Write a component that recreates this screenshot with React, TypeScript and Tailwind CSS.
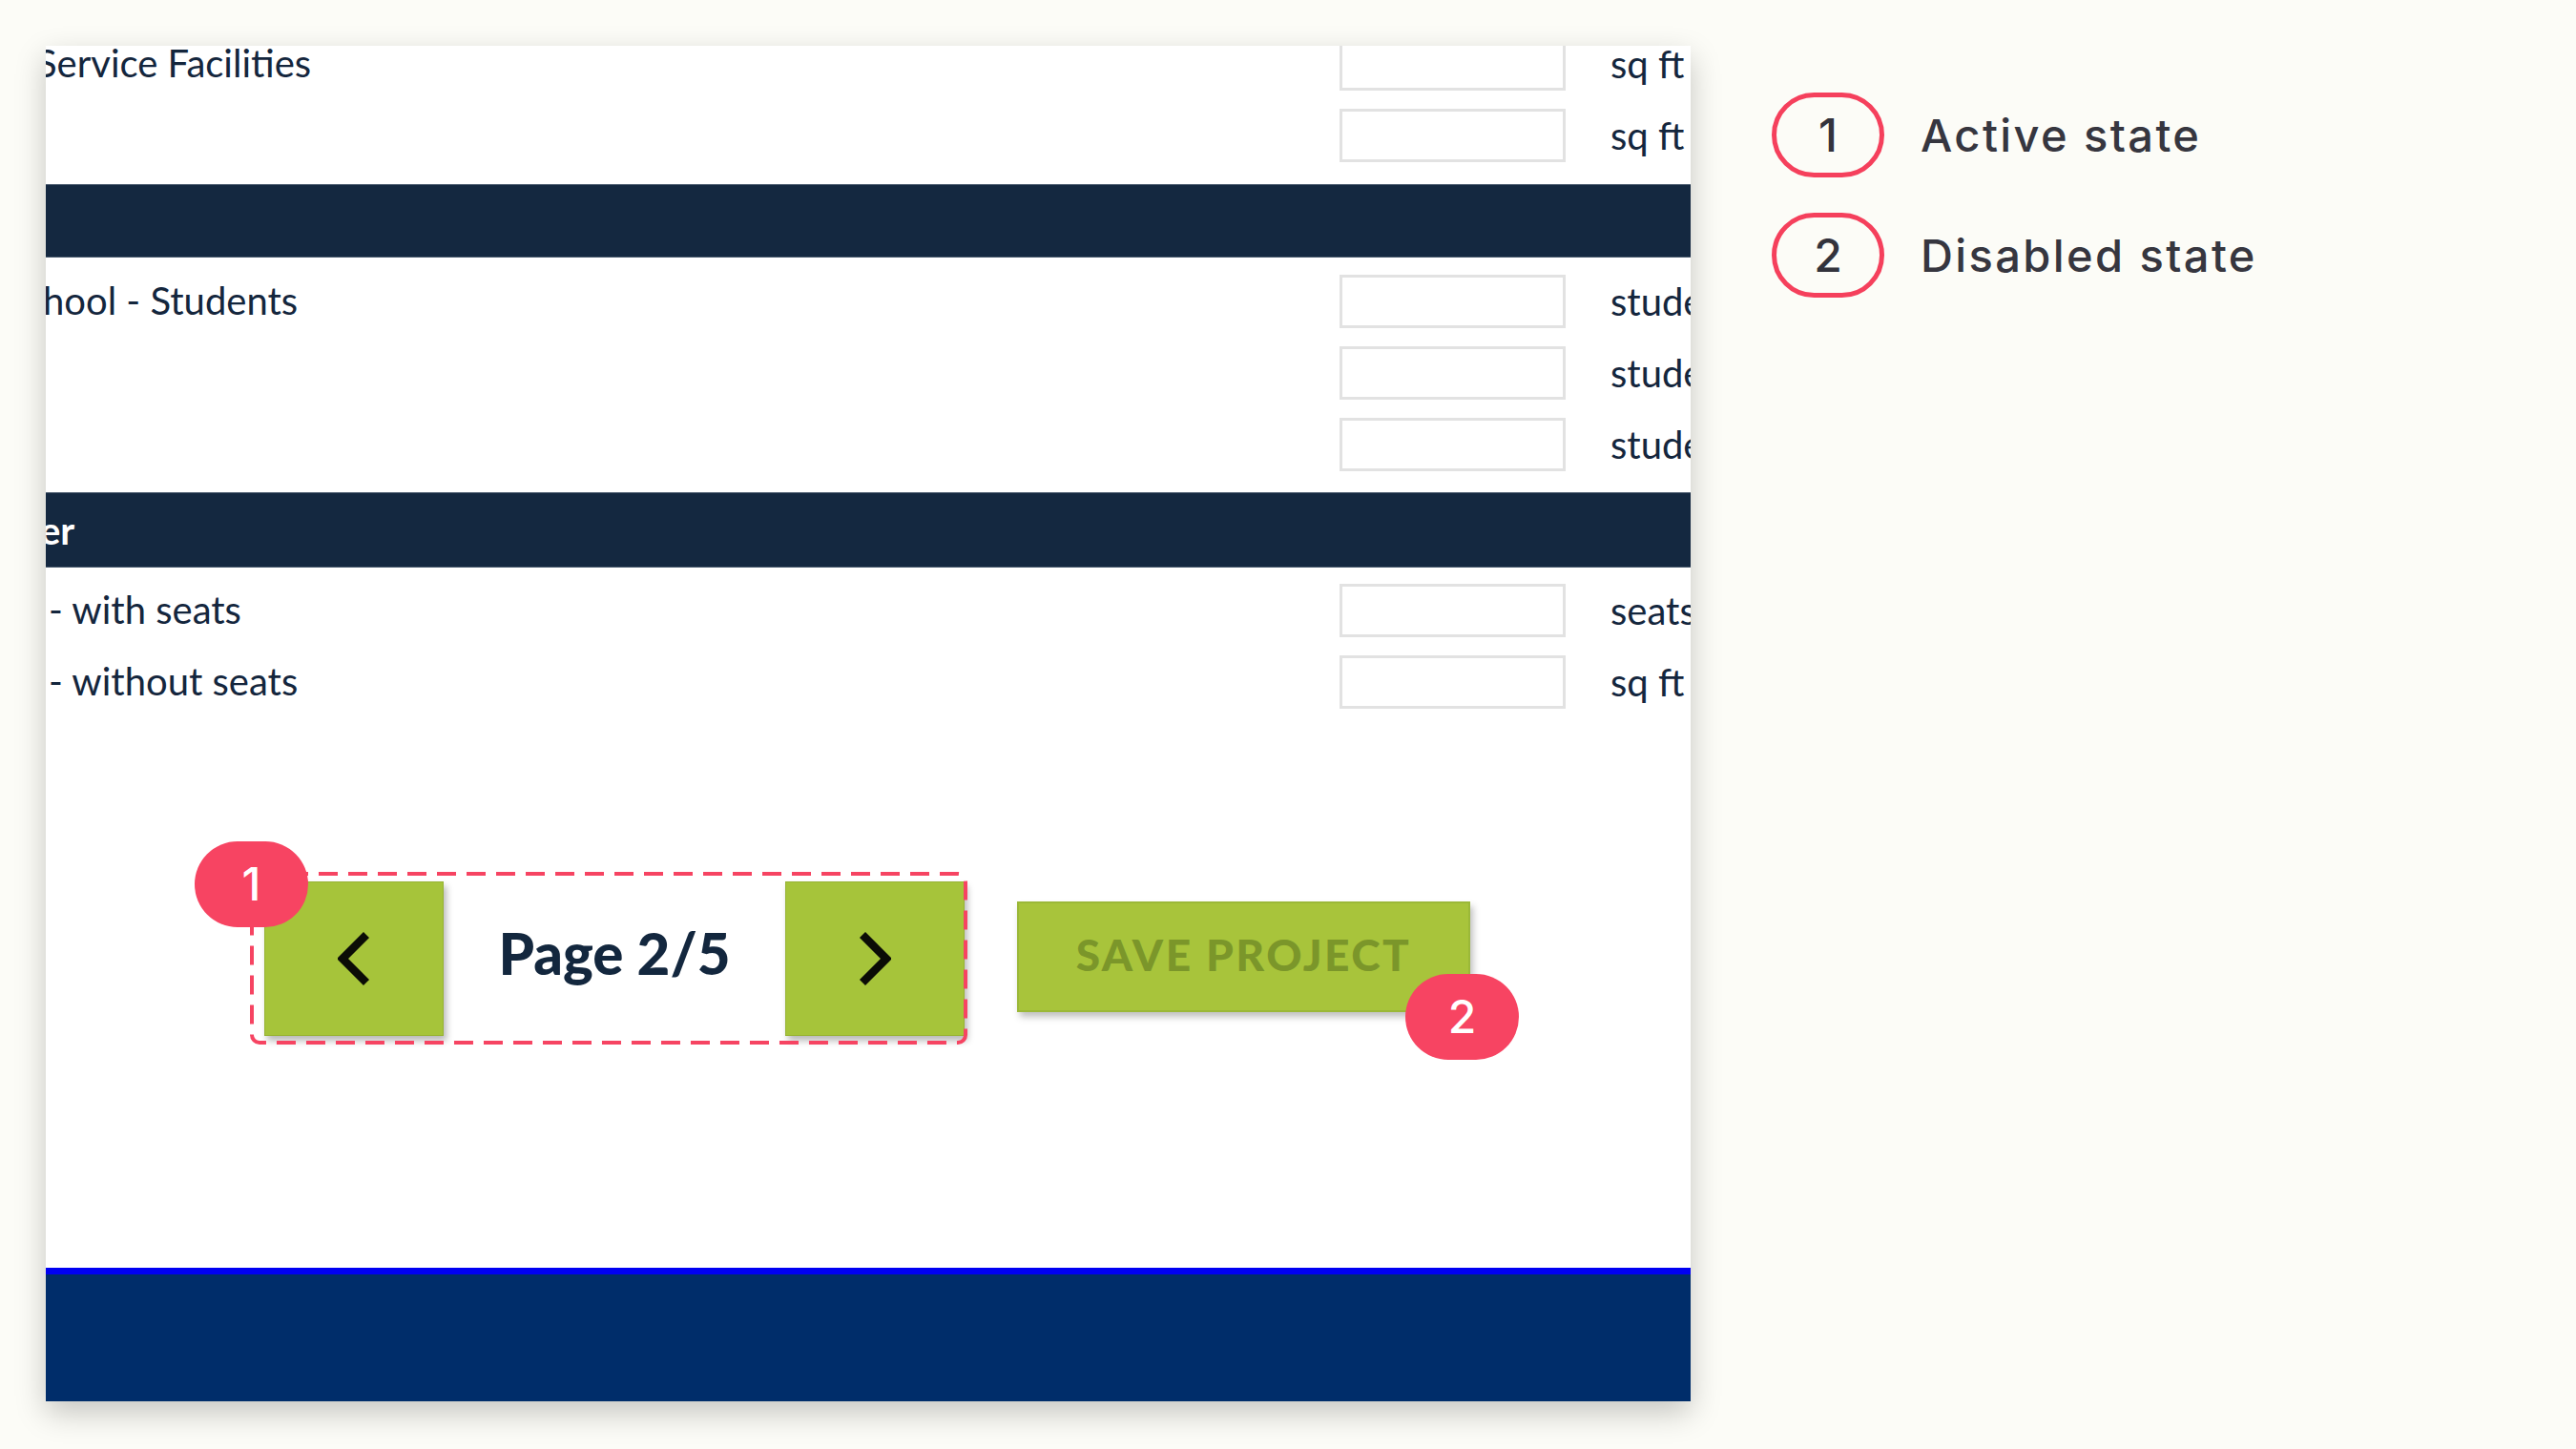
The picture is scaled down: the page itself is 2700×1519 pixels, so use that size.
import React from "react";

// ─── Form row ────────────────────────────────────────────────────────────────
function Row({ label, unit, offset }: { label: string; unit: string; offset: string }) {
  return (
    <div className="flex h-[75px] items-center">
      <div className="flex-1 min-w-0 overflow-visible whitespace-nowrap">
        <span className={`inline-block text-[40px] leading-none text-[#14263d] ${offset}`}>{label}</span>
      </div>
      <div className="h-[56px] w-[237px] shrink-0 border-[3px] border-[#e2e2e2] bg-white" />
      <span className="ml-[47px] w-[84px] shrink-0 whitespace-nowrap text-[40px] leading-none text-[#14263d]">
        {unit}
      </span>
    </div>
  );
}

function SectionBar({ children, height }: { children?: React.ReactNode; height: string }) {
  return (
    <div
      className={`flex ${height} items-center border-y border-[#4a5b6e] bg-[#142840] whitespace-nowrap text-[40px] font-bold leading-none text-white`}
    >
      {children}
    </div>
  );
}

// ─── Chevron ─────────────────────────────────────────────────────────────────
function Chevron({ dir }: { dir: "left" | "right" }) {
  const points = dir === "left" ? "30,3 5,28 30,53" : "4,3 29,28 4,53";
  return (
    <svg width="34" height="56" viewBox="0 0 34 56" fill="none">
      <polyline points={points} stroke="#0b0c06" strokeWidth="8.5" strokeLinejoin="miter" />
    </svg>
  );
}

function Badge({ n, className }: { n: string; className: string }) {
  return (
    <div
      className={`absolute flex h-[90px] w-[119px] items-center justify-center rounded-[46px] bg-[#f74462] font-['Inter',sans-serif] text-[48px] font-medium text-white ${className}`}
    >
      {n}
    </div>
  );
}

function LegendItem({ n, text }: { n: string; text: string }) {
  return (
    <div className="flex items-center">
      <div className="flex h-[89px] w-[118px] items-center justify-center rounded-[45px] border-[5px] border-[#f5405c] text-[48px] font-medium text-[#33333c]">
        {n}
      </div>
      <span className="ml-[38px] mt-[2px] text-[47px] font-medium tracking-[2.4px] text-[#36363f]">{text}</span>
    </div>
  );
}

export default function App() {
  return (
    <div className="flex min-h-[1519px] w-[2700px] bg-[#fcfcf7] font-['Lato',sans-serif]">
      {/* Page panel */}
      <div className="ml-[48px] mt-[48px] flex h-[1421px] w-[1724px] shrink-0 flex-col overflow-hidden bg-white shadow-[0_12px_30px_rgba(0,0,0,0.22)]">
        <div className="-mt-[19px]">
          <Row label="Service Facilities" unit="sq ft" offset="-ml-[10px]" />
          <Row label="" unit="sq ft" offset="" />
        </div>
        <div className="mt-[14px]">
          <SectionBar height="h-[77px]" />
        </div>
        <div className="mt-[8px]">
          <Row label="hool - Students" unit="students" offset="-ml-[3px]" />
          <Row label="" unit="students" offset="" />
          <Row label="" unit="students" offset="" />
        </div>
        <div className="mt-[13px]">
          <SectionBar height="h-[79px]">
            <span className="-ml-[6px]">er</span>
          </SectionBar>
        </div>
        <div className="mt-[7px]">
          <Row label="- with seats" unit="seats" offset="ml-[3px]" />
          <Row label="- without seats" unit="sq ft" offset="ml-[3px]" />
        </div>

        {/* Pagination + save */}
        <div className="mt-[162px] ml-[214px] flex items-center gap-[52px]">
          <div className="relative flex h-[181px] w-[752px] shrink-0 items-center">
            <svg className="absolute inset-0" width="752" height="181" viewBox="0 0 752 181" fill="none">
              <rect
                x="2"
                y="2"
                width="748"
                height="177"
                rx="8"
                stroke="#f64462"
                strokeWidth="4"
                strokeDasharray="20 11"
              />
            </svg>
            <button className="ml-[15px] mt-[1px] flex h-[162px] w-[188px] items-center justify-center border border-[#97b334] bg-[#a6c43a] shadow-[3px_5px_7px_rgba(0,0,0,0.28)]">
              <Chevron dir="left" />
            </button>
            <span className="flex-1 -mt-[12px] text-center text-[60px] font-black leading-none text-[#13273e]">
              Page 2/5
            </span>
            <button className="mr-[3px] mt-[1px] flex h-[162px] w-[188px] items-center justify-center border border-[#97b334] bg-[#a6c43a] shadow-[3px_5px_7px_rgba(0,0,0,0.28)]">
              <Chevron dir="right" />
            </button>
            <Badge n="1" className="left-[-58px] top-[-32px]" />
          </div>

          <div className="relative -mt-[3px]">
            <button
              disabled
              className="flex h-[116px] w-[475px] items-center justify-center border-2 border-[#9bb838] bg-[#a8c43b] pb-[6px] text-[46px] font-black tracking-[2.5px] text-[#7b962a] shadow-[3px_5px_7px_rgba(0,0,0,0.25)]"
            >
              SAVE PROJECT
            </button>
            <Badge n="2" className="left-[407px] top-[76px]" />
          </div>
        </div>

        {/* Footer */}
        <div className="mt-auto flex h-[140px] flex-col">
          <div className="h-[7px] bg-[#0000f2]" />
          <div className="flex-1 bg-[#002d6a]" />
        </div>
      </div>

      {/* Legend */}
      <div className="ml-[85px] mt-[97px] flex flex-col gap-[37px] font-['Inter',sans-serif]">
        <LegendItem n="1" text="Active state" />
        <LegendItem n="2" text="Disabled state" />
      </div>
    </div>
  );
}
